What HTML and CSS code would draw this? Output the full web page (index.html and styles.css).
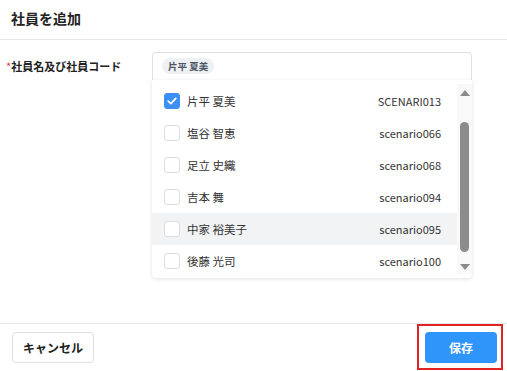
FILE: index.html
```html
<!DOCTYPE html>
<html lang="ja">
<head>
  <meta charset="UTF-8">
  <meta name="viewport" content="width=device-width, initial-scale=1.0">
  <title>社員を追加</title>
  <link rel="stylesheet" href="styles.css">
</head>
<body>

  <div class="modal">
    <div class="modal-header">
      <h1>社員を追加</h1>
    </div>

    <div class="modal-body">
      <div class="form-row">
        <label class="form-label"><span class="required">*</span>社員名及び社員コード</label>

        <div class="select">
          <div class="select-box">
            <span class="tag">片平 夏美</span>
          </div>

          <div class="dropdown">
            <ul class="options">
              <li class="option">
                <span class="check checked">
                  <svg width="10" height="8" viewBox="0 0 10 8"><path d="M1.2 4.1 L3.8 6.6 L8.8 1.4" fill="none" stroke="#fff" stroke-width="1.8" stroke-linecap="round" stroke-linejoin="round"/></svg>
                </span>
                <span class="name">片平 夏美</span>
                <span class="code">SCENARI013</span>
              </li>
              <li class="option">
                <span class="check"></span>
                <span class="name">塩谷 智恵</span>
                <span class="code">scenario066</span>
              </li>
              <li class="option">
                <span class="check"></span>
                <span class="name">足立 史織</span>
                <span class="code">scenario068</span>
              </li>
              <li class="option">
                <span class="check"></span>
                <span class="name">吉本 舞</span>
                <span class="code">scenario094</span>
              </li>
              <li class="option hover">
                <span class="check"></span>
                <span class="name">中家 裕美子</span>
                <span class="code">scenario095</span>
              </li>
              <li class="option">
                <span class="check"></span>
                <span class="name">後藤 光司</span>
                <span class="code">scenario100</span>
              </li>
            </ul>

            <div class="scrollbar">
              <span class="arrow up"></span>
              <div class="track"><div class="thumb"></div></div>
              <span class="arrow down"></span>
            </div>
          </div>
        </div>
      </div>
    </div>

    <div class="modal-footer">
      <button class="btn btn-cancel">キャンセル</button>
      <span class="highlight">
        <button class="btn btn-save">保存</button>
      </span>
    </div>
  </div>

</body>
</html>
```

FILE: styles.css
```css
* {
  margin: 0;
  padding: 0;
  box-sizing: border-box;
}

body {
  font-family: "Noto Sans CJK JP", "Noto Sans", sans-serif;
  background: #fff;
  color: #333;
  width: 507px;
  height: 371px;
  overflow: hidden;
}

.modal {
  display: flex;
  flex-direction: column;
  height: 371px;
}

/* Cabeçalho */
.modal-header {
  height: 40px;
  border-bottom: 1px solid #e4e6ea;
  padding: 8px 11px 0;
}

.modal-header h1 {
  font-size: 14px;
  font-weight: 700;
  color: #222;
  line-height: 20px;
}

.modal-body {
  flex: 1;
  padding: 12px 35px 0 6px;
}

.form-row {
  display: flex;
}

.form-label {
  width: 146px;
  font-size: 11px;
  font-weight: 700;
  color: #222;
  line-height: 16px;
  padding-top: 6px;
}

.required {
  color: #e53935;
  font-weight: 400;
}

.select {
  width: 320px;
}

.select-box {
  height: 28px;
  border: 1px solid #dfe2e6;
  border-bottom: none;
  border-radius: 4px 4px 0 0;
  padding: 0 9px;
  display: flex;
  align-items: center;
}

.tag {
  display: inline-block;
  background: #eef0f3;
  color: #4b5563;
  font-size: 9.5px;
  font-weight: 700;
  line-height: 16px;
  padding: 0 6px;
  border-radius: 8px;
  margin-top: -2px;
}

/* Lista suspensa */
.dropdown {
  display: flex;
  height: 198px;
  background: #fff;
  border-radius: 0 0 4px 4px;
  box-shadow: 0 1px 4px rgba(0, 0, 0, 0.12);
  padding: 5px 0 4px;
}

.options {
  list-style: none;
  flex: 1;
}

.option {
  display: flex;
  align-items: center;
  height: 32px;
  padding: 0 16px 0 12px;
  font-size: 11.5px;
}

.option.hover {
  background: #f2f3f5;
}

.check {
  width: 16px;
  height: 16px;
  border: 1px solid #d9dce1;
  border-radius: 3px;
  background: #fff;
  display: flex;
  align-items: center;
  justify-content: center;
  margin-right: 7px;
}

.check.checked {
  background: #3b8ff5;
  border-color: #3b8ff5;
}

.name {
  flex: 1;
  color: #333;
}

.code {
  font-size: 11px;
  color: #333;
}

.scrollbar {
  width: 15px;
  margin-top: -1px;
  display: flex;
  flex-direction: column;
  align-items: center;
  background: #f9f9f9;
}

.arrow {
  width: 0;
  height: 0;
  border-left: 5px solid transparent;
  border-right: 5px solid transparent;
}

.arrow.up {
  border-bottom: 6px solid #8c8c8c;
  margin: 6px 0 26px;
}

.arrow.down {
  border-top: 6px solid #8c8c8c;
  margin: 8px 0 4px;
}

.track {
  flex: 1;
  width: 100%;
  display: flex;
  justify-content: center;
}

.thumb {
  width: 9px;
  height: 130px;
  background: #8c8c8c;
  border-radius: 5px;
}

/* Rodapé */
.modal-footer {
  height: 48px;
  border-top: 1px solid #e4e6ea;
  display: flex;
  justify-content: space-between;
  align-items: flex-start;
  padding: 0 4px 0 12px;
}

.btn {
  font-family: inherit;
  font-size: 12px;
  font-weight: 700;
  height: 31px;
  border-radius: 4px;
  cursor: pointer;
}

.btn-cancel {
  margin-top: 8px;
  width: 82px;
  background: #fff;
  border: 1px solid #dcdfe3;
  color: #222;
}

.highlight {
  border: 2px solid #e32222;
  padding: 6px 4px 5px 6px;
}

.btn-save {
  display: block;
  width: 72px;
  background: #2f95fb;
  border: none;
  color: #fff;
}
```
